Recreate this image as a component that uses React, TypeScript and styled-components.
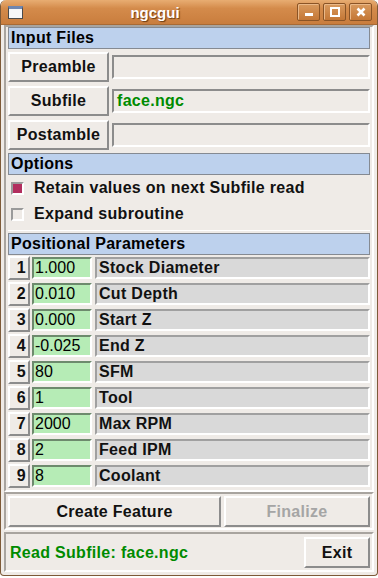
import React from 'react';
import styled, { createGlobalStyle } from 'styled-components';

const GlobalStyle = createGlobalStyle`
  html, body {
    margin: 0;
    padding: 0;
    background: #ffffff;
  }
  body {
    font-family: "Liberation Sans", Arial, sans-serif;
    letter-spacing: 0.3px;
  }
`

const Colors = {
  bg: '#efebe7',
  header: '#bdd1ed',
  green: '#b6ecb6',
  greenText: '#008b00',
  field: '#d9d9d9',
  dark: '#8c8c8c',
}

const Window = styled.div`
  width: 378px;
  height: 576px;
  display: flex;
  flex-direction: column;
  border-radius: 6px 6px 4px 4px;
  overflow: hidden;
  background: ${Colors.bg};
  box-sizing: border-box;
  border: 1px solid #7d5a38;
  border-top: none;
`

const TitleBar = styled.div`
  height: 24px;
  flex: none;
  display: flex;
  align-items: center;
  padding: 0 5px 0 7px;
  background: linear-gradient(#e8ad72 0%, #d48b4b 35%, #c97d3d 100%);
  border-bottom: 1px solid #a86a34;
`

const TitleIcon = styled.div`
  width: 13px;
  height: 9px;
  border: 1px solid #4a4a4a;
  border-top-width: 3px;
  border-top-color: #6f86b0;
  background: #f6f6f6;
  flex: none;
`

const Title = styled.div`
  flex: 1;
  text-align: center;
  color: #ffffff;
  font-weight: bold;
  font-size: 15px;
  letter-spacing: 0;
  text-shadow: 1px 1px 1px #6b3c14;
  padding-right: 10px;
`

const TitleButtons = styled.div`
  display: flex;
  gap: 3px;
`

const TitleButton = styled.div`
  width: 21px;
  height: 16px;
  border: 1px solid #8a5426;
  border-radius: 2px;
  background: linear-gradient(#d99a5e, #c47736);
  box-shadow: inset 1px 1px 0 #eab888;
  display: flex;
  align-items: center;
  justify-content: center;
`

const Body = styled.div`
  flex: 1;
  display: flex;
  flex-direction: column;
  padding: 0 3px 2px 3px;
`

const Frame = styled.div`
  border: 2px solid;
  border-color: #a8a49f #ffffff #ffffff #a8a49f;
  padding: 0 2px 2px 2px;
  display: flex;
  flex-direction: column;
`

const Header = styled.div`
  height: 20px;
  line-height: 20px;
  background: ${Colors.header};
  border: 1px solid #858a92;
  padding-left: 2px;
  font-size: 16px;
  font-weight: bold;
  color: #000;
`

const FileRows = styled.div`
  display: flex;
  flex-direction: column;
  gap: 4px;
  padding: 3px 0 3px 0;
`

const FileRow = styled.div`
  display: flex;
  align-items: center;
  gap: 3px;
`

const Button = styled.div<{ $width?: number; $height?: number; $disabled?: boolean }>`
  box-sizing: border-box;
  width: ${p => (p.$width ? `${p.$width}px` : 'auto')};
  height: ${p => p.$height || 30}px;
  flex: none;
  display: flex;
  align-items: center;
  justify-content: center;
  background: ${Colors.bg};
  border: 2px solid;
  border-color: #ffffff ${Colors.dark} ${Colors.dark} #ffffff;
  font-size: 16px;
  font-weight: bold;
  color: ${p => (p.$disabled ? '#a5a5a5' : '#111')};
`

const Entry = styled.div<{ $bg?: string; $bold?: boolean }>`
  box-sizing: border-box;
  flex: 1;
  height: 24px;
  display: flex;
  align-items: center;
  padding-left: 3px;
  background: ${p => p.$bg || Colors.bg};
  border: 2px solid;
  border-color: ${Colors.dark} #ffffff #ffffff ${Colors.dark};
  font-size: 16px;
  font-weight: ${p => (p.$bold ? 'bold' : 'normal')};
  color: ${Colors.greenText};
`

const Options = styled.div`
  display: flex;
  flex-direction: column;
  padding: 0 0 3px 0;
  margin-bottom: 2px;
  border-bottom: 1px solid #ffffff;
`

const CheckRow = styled.div`
  height: 26px;
  display: flex;
  align-items: center;
  gap: 10px;
  padding-left: 3px;
  font-size: 16px;
  font-weight: bold;
  color: #111;
`

const CheckBox = styled.div<{ $checked?: boolean }>`
  box-sizing: border-box;
  width: 13px;
  height: 13px;
  border: 2px solid;
  border-color: #9a9a9a #ffffff #ffffff #9a9a9a;
  background: ${p => (p.$checked ? '#b22e5e' : Colors.bg)};
`

const Params = styled.div`
  display: flex;
  flex-direction: column;
  gap: 2px;
  padding-top: 1px;
`

const ParamRow = styled.div`
  display: flex;
  align-items: center;
  height: 24px;
`

const NumButton = styled(Button)`
  justify-content: flex-end;
  padding-right: 2px;
`

const ValueEntry = styled(Entry)`
  flex: none;
  width: 60px;
  height: 22px;
  margin-left: 2px;
  padding-left: 1px;
  color: #000;
  letter-spacing: 0;
  border-color: #6d8a6d #ffffff #ffffff #6d8a6d;
`

const LabelField = styled(Entry)`
  height: 22px;
  margin-left: 3px;
  padding-left: 2px;
  color: #111;
  font-weight: bold;
  background: ${Colors.field};
  border-color: #a0a0a0 #ffffff #ffffff #a0a0a0;
`

const ActionFrame = styled(Frame)`
  flex-direction: row;
  gap: 3px;
  padding: 2px 2px 1px 2px;
  margin-top: 0;
`

const StatusFrame = styled(Frame)`
  flex-direction: row;
  align-items: center;
  justify-content: space-between;
  padding: 3px 2px 2px 2px;
  margin-top: 2px;
`

const Status = styled.div`
  padding-left: 2px;
  font-size: 16px;
  font-weight: bold;
  color: ${Colors.greenText};
`

const files = [
  { label: 'Preamble', value: '' },
  { label: 'Subfile', value: 'face.ngc' },
  { label: 'Postamble', value: '' },
]

const params = [
  ['1.000', 'Stock Diameter'],
  ['0.010', 'Cut Depth'],
  ['0.000', 'Start Z'],
  ['-0.025', 'End Z'],
  ['80', 'SFM'],
  ['1', 'Tool'],
  ['2000', 'Max RPM'],
  ['2', 'Feed IPM'],
  ['8', 'Coolant'],
]

const App: React.FC = () => (
  <>
    <GlobalStyle />
    <Window>
      <TitleBar>
        <TitleIcon />
        <Title>ngcgui</Title>
        <TitleButtons>
          <TitleButton>
            <svg width="12" height="12" viewBox="0 0 12 12">
              <rect x="2" y="7" width="8" height="3" fill="#fff" />
            </svg>
          </TitleButton>
          <TitleButton>
            <svg width="12" height="12" viewBox="0 0 12 12">
              <rect x="2" y="2" width="8" height="8" fill="none" stroke="#fff" strokeWidth="2" />
            </svg>
          </TitleButton>
          <TitleButton>
            <svg width="12" height="12" viewBox="0 0 12 12">
              <path d="M2.5 2.5 L9.5 9.5 M9.5 2.5 L2.5 9.5" stroke="#fff" strokeWidth="2.6" />
            </svg>
          </TitleButton>
        </TitleButtons>
      </TitleBar>
      <Body>
        <Frame>
          <Header>Input Files</Header>
          <FileRows>
            {files.map(f => (
              <FileRow key={f.label}>
                <Button $width={101}>{f.label}</Button>
                <Entry $bold>{f.value}</Entry>
              </FileRow>
            ))}
          </FileRows>
          <Header>Options</Header>
          <Options>
            <CheckRow>
              <CheckBox $checked />
              Retain values on next Subfile read
            </CheckRow>
            <CheckRow>
              <CheckBox />
              Expand subroutine
            </CheckRow>
          </Options>
          <Header>Positional Parameters</Header>
          <Params>
            {params.map(([value, label], i) => (
              <ParamRow key={label}>
                <NumButton $width={22} $height={24}>{i + 1}</NumButton>
                <ValueEntry $bg={Colors.green}>{value}</ValueEntry>
                <LabelField>{label}</LabelField>
              </ParamRow>
            ))}
          </Params>
        </Frame>
        <ActionFrame>
          <Button $width={213} $height={31}>Create Feature</Button>
          <Button $width={146} $height={31} $disabled>Finalize</Button>
        </ActionFrame>
        <StatusFrame>
          <Status>Read Subfile: face.ngc</Status>
          <Button $width={66} $height={31}>Exit</Button>
        </StatusFrame>
      </Body>
    </Window>
  </>
)

export default App
